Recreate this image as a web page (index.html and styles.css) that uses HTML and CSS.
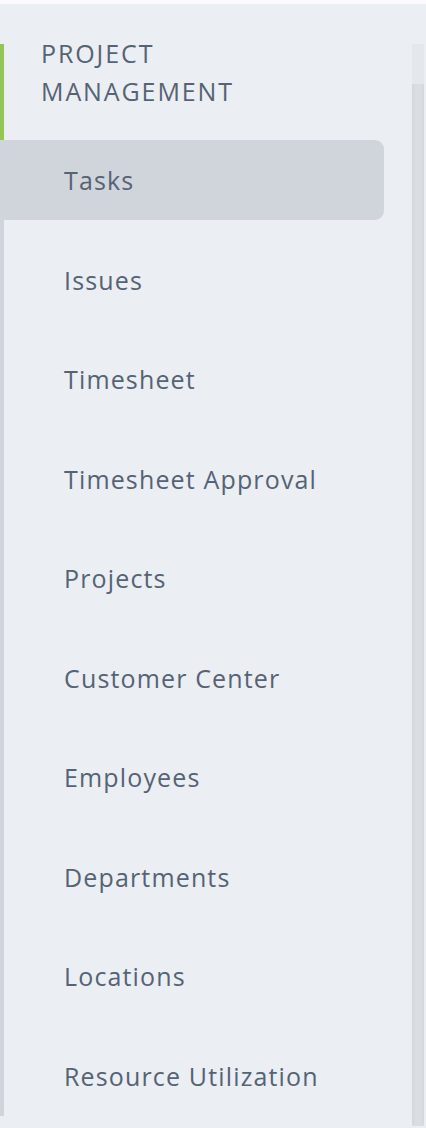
FILE: index.html
```html
<!DOCTYPE html>
<html lang="en">
<head>
    <meta charset="UTF-8">
    <meta name="viewport" content="width=device-width, initial-scale=1.0">
    <title>Project Management</title>
    <link rel="stylesheet" href="styles.css">
</head>
<body>

    <div class="top-strip"></div>

    <div class="sidebar">
        <!-- Navigation -->
        <nav class="nav">
            <div class="section">
                <h2 class="section-title">PROJECT<br>MANAGEMENT</h2>
            </div>
            <ul class="menu">
                <li class="menu-item active">Tasks</li>
                <li class="menu-item">Issues</li>
                <li class="menu-item">Timesheet</li>
                <li class="menu-item">Timesheet Approval</li>
                <li class="menu-item">Projects</li>
                <li class="menu-item">Customer Center</li>
                <li class="menu-item">Employees</li>
                <li class="menu-item">Departments</li>
                <li class="menu-item">Locations</li>
                <li class="menu-item">Resource Utilization</li>
            </ul>
        </nav>

        <!-- Fake scrollbar -->
        <div class="scrollbar">
            <div class="scroll-thumb"></div>
        </div>
    </div>

</body>
</html>
```

FILE: styles.css
```css
body {
    font-family: "Open Sans", "DejaVu Sans", sans-serif;
    margin: 0;
    height: 1128px;
    overflow: hidden;
    background-color: #ebeef3;
    color: #556375;
}

.top-strip {
    height: 4px;
    background-color: #fafbfc;
}

.sidebar {
    display: flex;
    padding-top: 40px;
}

.nav {
    width: 412px;
}

/* Section header with green marker */
.section {
    display: flow-root;
    height: 96px;
    border-left: 4px solid #93c656;
    padding-left: 37px;
    box-sizing: border-box;
}

.section-title {
    margin: -10px 0 0;
    font-size: 25px;
    font-weight: 400;
    line-height: 38px;
    letter-spacing: 1.9px;
}

.menu {
    list-style: none;
    margin: 0 28px 0 0;
    padding: 0;
    border-left: 4px solid #d0d5dc;
    display: flex;
    flex-direction: column;
    gap: 19.55px;
}

.menu-item {
    height: 80px;
    display: flex;
    align-items: center;
    padding-left: 60px;
    font-size: 25px;
    letter-spacing: 1.15px;
    border-radius: 0 9px 9px 0;
}

.menu-item.active {
    background-color: #d0d5dc;
    margin-left: -4px;
    padding-left: 64px;
}

.scrollbar {
    width: 12px;
    height: 1082px;
    background-color: #e4e7eb;
    display: flex;
    flex-direction: column;
    padding-top: 40px;
    box-sizing: border-box;
}

.scroll-thumb {
    flex: 1;
    background: linear-gradient(to right, #d3d7dc, #dadde1 30%, #dadde1 70%, #d3d7dc);
    border-radius: 0 0 2px 2px;
}
```
